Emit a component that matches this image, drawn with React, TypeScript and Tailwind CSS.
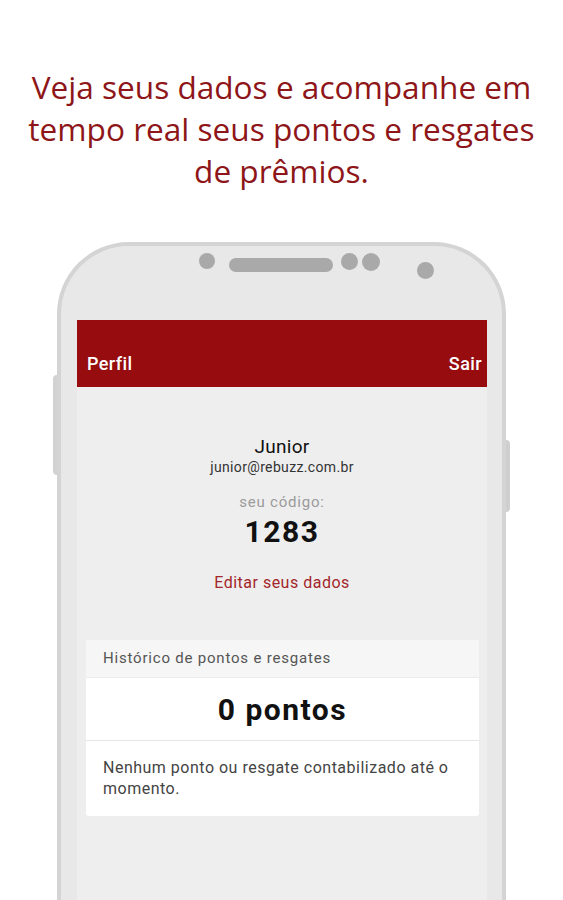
import React from 'react';

const ui = { fontFamily: 'Roboto, "Liberation Sans", Arial, sans-serif' };

const Phone: React.FC = () => (
  <div className="relative ml-[57px] w-[449px]">
    {/* side buttons */}
    <div className="absolute left-[-4px] top-[133px] h-[100px] w-[5px] rounded-l-sm bg-[#d2d2d2]" />
    <div className="absolute right-[-4px] top-[198px] h-[72px] w-[5px] rounded-r-sm bg-[#cfcfcf]" />

    <div className="relative h-[700px] rounded-t-[72px] border-[4px] border-b-0 border-[#d4d4d4] bg-[#e8e8e8]">
      {/* earpiece + sensors */}
      <div className="flex h-[74px] items-start pl-[138px] pt-[7px]">
        <div className="h-[16px] w-[16px] rounded-full bg-[#a9a9a9]" />
        <div className="ml-[14px] mt-[5px] h-[14px] w-[104px] rounded-full bg-[#a9a9a9]" />
        <div className="ml-[8px] h-[17px] w-[17px] rounded-full bg-[#a9a9a9]" />
        <div className="ml-[4px] h-[18px] w-[18px] rounded-full bg-[#a9a9a9]" />
        <div className="ml-[37px] mt-[9px] h-[17px] w-[17px] rounded-full bg-[#a9a9a9]" />
      </div>

      {/* screen */}
      <div className="ml-[16px] mr-[15px] h-[620px] bg-[#eeeeee]" style={ui}>
        <div className="flex h-[67px] items-end justify-between bg-[#960c0f] pl-[10px] pr-[5px] pb-[10px] text-[18px] font-medium tracking-[0.4px] text-white">
          <span>Perfil</span>
          <span>Sair</span>
        </div>

        <div className="flex flex-col items-center pt-[49px]">
          <div className="text-[19px] leading-[22px] tracking-[0.3px] text-[#111]">Junior</div>
          <div className="text-[14px] leading-[18px] tracking-[0.35px] text-[#333]">junior@rebuzz.com.br</div>
          <div className="mt-[17px] text-[15px] leading-[18px] tracking-[0.8px] text-[#9b9b9b]">seu código:</div>
          <div className="mt-[3px] text-[30px] font-bold leading-[35px] tracking-[1.5px] text-[#111]">1283</div>
          <div className="mt-[25px] text-[16px] leading-[18px] tracking-[0.5px] text-[#a3262b]">Editar seus dados</div>
        </div>

        <div className="mx-[9px] mt-[48px] w-[393px] rounded-[3px] bg-white">
          <div className="flex h-[38px] items-center border-b border-[#ececec] bg-[#f6f6f6] px-[17px] text-[15px] tracking-[0.8px] text-[#555]">
            Histórico de pontos e resgates
          </div>
          <div className="flex h-[63px] items-center justify-center border-b border-[#e6e6e6] text-[30px] font-bold tracking-[1.5px] text-[#111]">
            0 pontos
          </div>
          <div className="px-[17px] pt-[16px] pb-[17px] text-[16px] leading-[21px] tracking-[0.5px] text-[#444]">
            Nenhum ponto ou resgate contabilizado até o momento.
          </div>
        </div>
      </div>
    </div>
  </div>
);

export default function App() {
  return (
    <div className="h-[900px] w-[563px] overflow-hidden bg-white">
      <h1
        className="px-[16px] pt-[66px] text-center text-[31.6px] font-normal leading-[42px] text-[#8e1518]"
        style={{ fontFamily: '"Open Sans", "Noto Sans", sans-serif' }}
      >
        Veja seus dados e acompanhe em tempo real seus pontos e resgates de prêmios.
      </h1>
      <div className="mt-[50px]">
        <Phone />
      </div>
    </div>
  );
}
